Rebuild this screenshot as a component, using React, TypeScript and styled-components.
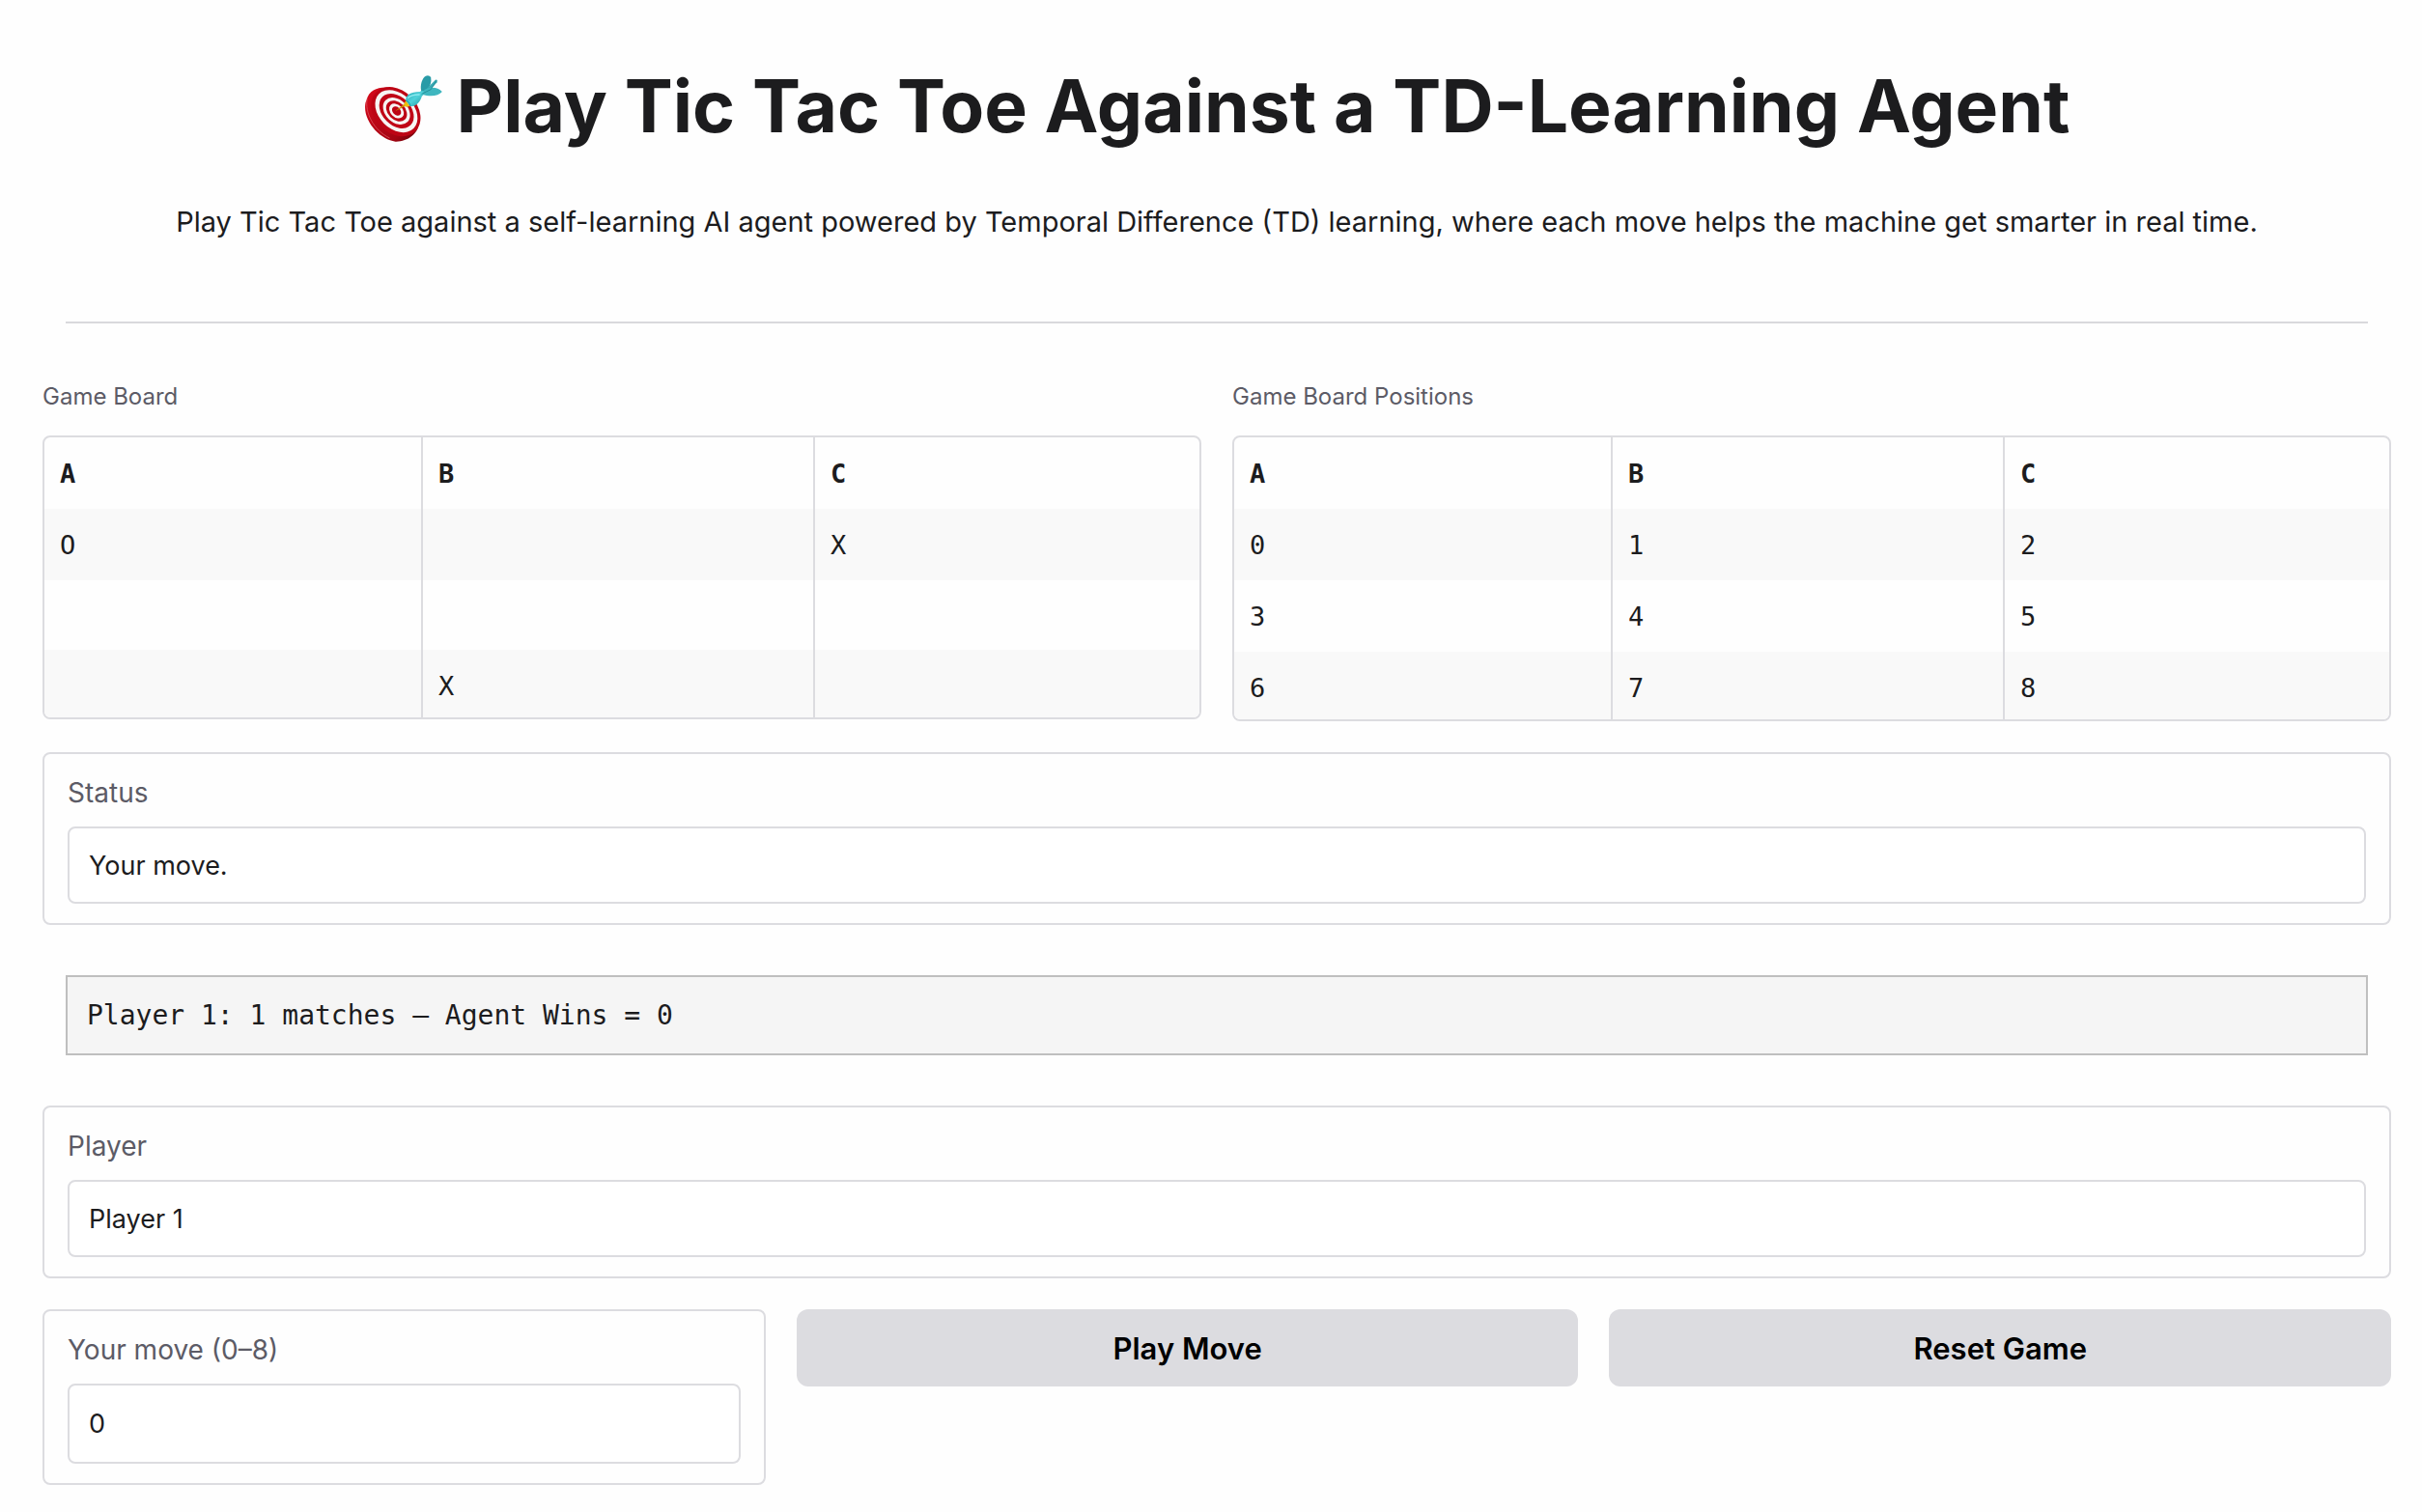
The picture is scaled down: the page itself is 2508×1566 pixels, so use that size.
import React, { useState } from "react";
import styled, { createGlobalStyle } from "styled-components";

const line = "#dcdce0";
const ink = "#1c1c1e";
const muted = "#5c5b66";
const sans = `Inter, "Liberation Sans", sans-serif`;
const mono = `"DejaVu Sans Mono", "Liberation Mono", monospace`;

const GlobalStyle = createGlobalStyle`
  *, *::before, *::after { box-sizing: border-box; }
  body {
    margin: 0;
    background: #fefefe;
    color: ${ink};
    font-family: ${sans};
  }
`;

const Page = styled.main`
  display: flex;
  flex-direction: column;
  gap: 32px;
  padding: 60px 32px 24px 44px;
`;

const Header = styled.header`
  padding: 0 24px;
  margin-bottom: 26px;
  text-align: center;
`;

const Title = styled.h1`
  display: flex;
  align-items: center;
  justify-content: center;
  gap: 14px;
  margin: 0 0 48px;
  font-size: 75px;
  line-height: 100px;
  font-weight: 700;
`;

const Intro = styled.p`
  margin: 0;
  font-size: 29px;
  line-height: 44px;
`;

const Rule = styled.hr`
  height: 2px;
  margin: 81px 0 0;
  border: 0;
  background: #d9d9dc;
`;

const Boards = styled.div`
  display: grid;
  grid-template-columns: 1fr 1fr;
  align-items: start;
  gap: 32px;
`;

const BoardLabel = styled.h2`
  margin: 0 0 22px;
  color: ${muted};
  font-size: 24px;
  line-height: 36px;
  font-weight: 400;
`;

const Frame = styled.div`
  overflow: hidden;
  border: 2px solid ${line};
  border-radius: 8px;
`;

const Grid = styled.table`
  width: 100%;
  table-layout: fixed;
  border-spacing: 0;
  font-family: ${mono};
  font-size: 27px;
  line-height: 40px;

  th,
  td {
    height: 72px;
    padding: 18px 16px 16px;
    text-align: left;
    vertical-align: top;
  }
  th + th,
  td + td {
    border-left: 2px solid ${line};
  }
  th:nth-child(1) {
    width: calc(100% * 195 / 598);
  }
  th:nth-child(2) {
    width: calc(100% * 203 / 598);
  }
  tbody tr:nth-child(odd) {
    background: #f9f9f9;
  }
  tbody tr:last-child td {
    height: 70px;
    padding-bottom: 12px;
  }
`;

const Panel = styled.div`
  display: flex;
  flex-direction: column;
  gap: 15px;
  padding: 20px 24px;
  border: 2px solid ${line};
  border-radius: 8px;
`;

const Label = styled.label`
  color: ${muted};
  font-size: 28px;
  line-height: 40px;
`;

const Input = styled.input`
  width: 100%;
  height: ${(p) => (p.type === "number" ? 83 : 80)}px;
  padding: 0 20px;
  border: 2px solid ${line};
  border-radius: 8px;
  background: #fff;
  color: ${ink};
  font-family: ${sans};
  font-size: 27px;
  line-height: 40px;
  appearance: textfield;

  &::-webkit-inner-spin-button,
  &::-webkit-outer-spin-button {
    appearance: none;
    margin: 0;
  }
`;

const Score = styled.pre`
  margin: 20px 24px;
  padding: 20px;
  border: 2px solid #bfbfbf;
  background: #f5f5f5;
  font-family: ${mono};
  font-size: 28px;
  line-height: 39px;
`;

const Controls = styled.div`
  display: grid;
  grid-template-columns: 37fr 40fr 40fr;
  align-items: start;
  gap: 32px;
`;

const Button = styled.button`
  height: 80px;
  border: 0;
  border-radius: 12px;
  background: ${line};
  color: #000;
  font-family: ${sans};
  font-size: 31px;
  font-weight: 600;
  cursor: pointer;
`;

function Target() {
  return (
    <svg width="82" height="74" viewBox="55 40 245 222" aria-hidden="true">
      <defs>
        <linearGradient id="rim" x1="0" y1="0" x2="1" y2="1">
          <stop offset="0" stopColor="#d80a1c" />
          <stop offset="0.75" stopColor="#a30512" />
          <stop offset="1" stopColor="#5e0208" />
        </linearGradient>
        <linearGradient id="shaft" x1="0" y1="0" x2="1" y2="1">
          <stop offset="0" stopColor="#1fa3ae" />
          <stop offset="0.5" stopColor="#4fd2da" />
          <stop offset="1" stopColor="#178790" />
        </linearGradient>
      </defs>
      <path d="M62 132 C70 100 100 90 130 93 C180 98 226 152 224 206 C223 236 190 262 152 261 C105 256 48 196 59 140 Z" fill="url(#rim)" />
      <path d="M64 128 C56 170 84 226 134 250" fill="none" stroke="#e3606a" strokeWidth="2" />
      <g transform="rotate(45 149 168)">
        <ellipse cx="152" cy="165" rx="86" ry="66" fill="#bd0515" />
        <ellipse cx="152" cy="163" rx="76" ry="54" fill="#f7f5f3" />
        <ellipse cx="152" cy="162" rx="62" ry="44" fill="#c00516" />
        <ellipse cx="152" cy="162" rx="48" ry="35" fill="#f7f5f3" />
        <ellipse cx="152" cy="162" rx="37" ry="27" fill="#bd0515" />
        <ellipse cx="152" cy="162" rx="26" ry="19" fill="#f7f5f3" />
        <ellipse cx="152" cy="162" rx="16" ry="12" fill="#bd0515" />
      </g>
      <path d="M153 165 L180 144 L184 149 Z" fill="#d59b00" stroke="#b37a00" strokeWidth="1" />
      <path d="M178 147 L185 130 L199 151 L184 153 Z" fill="#f0bd0b" />
      <path d="M184 134 C184 114 198 108 228 106 L246 93 L252 104 L234 120 C228 140 216 152 197 151 Z" fill="url(#shaft)" />
      <path d="M184 134 Q196 136 198 151" fill="none" stroke="#117b86" strokeWidth="2" />
      <path d="M232 104 C228 86 234 64 246 57 Q257 54 262 61 Q266 82 249 104 Z" fill="#299ba7" />
      <path d="M248 98 L276 69 Q284 66 281 77 L258 102 Z" fill="#38aab4" />
      <path d="M242 100 C262 90 282 91 297 106 C286 120 258 122 236 114 Z" fill="#3eb6bf" />
      <path d="M233 113 L262 99 L279 72" fill="none" stroke="#187f89" strokeWidth="2" />
      <path d="M191 125 Q204 114 226 115" fill="none" stroke="#8ceaf0" strokeWidth="4" strokeLinecap="round" />
    </svg>
  );
}

function Board({ label, rows }: { label: string; rows: string[][] }) {
  return (
    <section>
      <BoardLabel>{label}</BoardLabel>
      <Frame>
        <Grid aria-label={label}>
          <thead>
            <tr>
              {["A", "B", "C"].map((name) => (
                <th key={name} scope="col">{name}</th>
              ))}
            </tr>
          </thead>
          <tbody>
            {rows.map((row, r) => (
              <tr key={r}>
                {row.map((cell, c) => (
                  <td key={c}>{cell}</td>
                ))}
              </tr>
            ))}
          </tbody>
        </Grid>
      </Frame>
    </section>
  );
}

const board = [
  ["O", "", "X"],
  ["", "", ""],
  ["", "X", ""],
];

const positions = [
  ["0", "1", "2"],
  ["3", "4", "5"],
  ["6", "7", "8"],
];

export default function App() {
  const [player, setPlayer] = useState("Player 1");
  const [move, setMove] = useState("0");

  return (
    <>
      <GlobalStyle />
      <Page>
        <Header>
          <Title>
            <Target />
            Play Tic Tac Toe Against a TD-Learning Agent
          </Title>
          <Intro>
            Play Tic Tac Toe against a self-learning AI agent powered by Temporal Difference (TD)
            learning, where each move helps the machine get smarter in real time.
          </Intro>
          <Rule />
        </Header>

        <Boards>
          <Board label="Game Board" rows={board} />
          <Board label="Game Board Positions" rows={positions} />
        </Boards>

        <Panel>
          <Label htmlFor="status">Status</Label>
          <Input id="status" type="text" readOnly value="Your move." />
        </Panel>

        <Score>Player 1: 1 matches — Agent Wins = 0</Score>

        <Panel>
          <Label htmlFor="player">Player</Label>
          <Input id="player" type="text" value={player} onChange={(e) => setPlayer(e.target.value)} />
        </Panel>

        <Controls>
          <Panel>
            <Label htmlFor="move">Your move (0–8)</Label>
            <Input
              id="move"
              type="number"
              min={0}
              max={8}
              value={move}
              onChange={(e) => setMove(e.target.value)}
            />
          </Panel>
          <Button type="button">Play Move</Button>
          <Button type="button">Reset Game</Button>
        </Controls>
      </Page>
    </>
  );
}
